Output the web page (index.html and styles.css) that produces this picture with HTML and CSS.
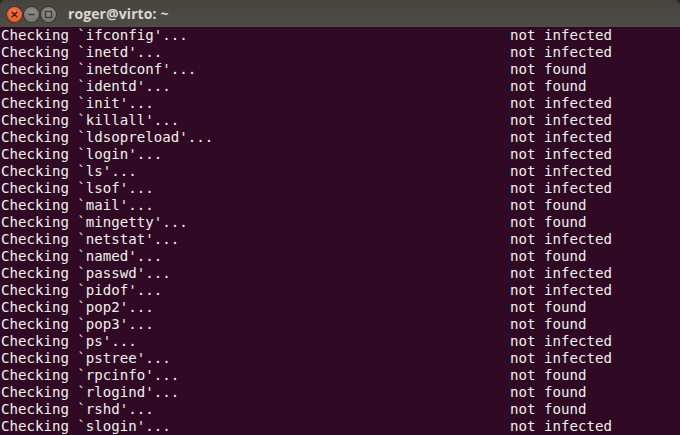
FILE: index.html
```html
<!DOCTYPE html>
<html>
<head>
<meta charset="utf-8">
<link rel="stylesheet" href="styles.css">
</head>
<body>
<div class="window">
  <div class="titlebar">
    <div class="buttons">
      <span class="btn close"><svg viewBox="0 0 16 16" width="15" height="15"><path d="M5.5 5.5l5 5M10.5 5.5l-5 5" stroke="#3b1f12" stroke-width="1.6" stroke-linecap="round"/></svg></span>
      <span class="btn"><svg viewBox="0 0 16 16" width="15" height="15"><path d="M4.5 8h7" stroke="#3c3b37" stroke-width="1.6"/></svg></span>
      <span class="btn"><svg viewBox="0 0 16 16" width="15" height="15"><rect x="4.8" y="4.8" width="6.4" height="6.4" fill="none" stroke="#3c3b37" stroke-width="1.4"/></svg></span>
    </div>
    <div class="title">roger@virto: ~</div>
  </div>
  <div class="term">
    <div class="row"><span class="c">Checking `ifconfig'...</span><span>not infected</span></div>
    <div class="row"><span class="c">Checking `inetd'...</span><span>not infected</span></div>
    <div class="row"><span class="c">Checking `inetdconf'...</span><span>not found</span></div>
    <div class="row"><span class="c">Checking `identd'...</span><span>not found</span></div>
    <div class="row"><span class="c">Checking `init'...</span><span>not infected</span></div>
    <div class="row"><span class="c">Checking `killall'...</span><span>not infected</span></div>
    <div class="row"><span class="c">Checking `ldsopreload'...</span><span>not infected</span></div>
    <div class="row"><span class="c">Checking `login'...</span><span>not infected</span></div>
    <div class="row"><span class="c">Checking `ls'...</span><span>not infected</span></div>
    <div class="row"><span class="c">Checking `lsof'...</span><span>not infected</span></div>
    <div class="row"><span class="c">Checking `mail'...</span><span>not found</span></div>
    <div class="row"><span class="c">Checking `mingetty'...</span><span>not found</span></div>
    <div class="row"><span class="c">Checking `netstat'...</span><span>not infected</span></div>
    <div class="row"><span class="c">Checking `named'...</span><span>not found</span></div>
    <div class="row"><span class="c">Checking `passwd'...</span><span>not infected</span></div>
    <div class="row"><span class="c">Checking `pidof'...</span><span>not infected</span></div>
    <div class="row"><span class="c">Checking `pop2'...</span><span>not found</span></div>
    <div class="row"><span class="c">Checking `pop3'...</span><span>not found</span></div>
    <div class="row"><span class="c">Checking `ps'...</span><span>not infected</span></div>
    <div class="row"><span class="c">Checking `pstree'...</span><span>not infected</span></div>
    <div class="row"><span class="c">Checking `rpcinfo'...</span><span>not found</span></div>
    <div class="row"><span class="c">Checking `rlogind'...</span><span>not found</span></div>
    <div class="row"><span class="c">Checking `rshd'...</span><span>not found</span></div>
    <div class="row"><span class="c">Checking `slogin'...</span><span>not infected</span></div>
  </div>
</div>
</body>
</html>
```
FILE: styles.css
```css
html, body {
  margin: 0;
  padding: 0;
  background: #2b2b2b;
  width: 680px;
  height: 435px;
  overflow: hidden;
}
.window {
  width: 680px;
  height: 435px;
  display: flex;
  flex-direction: column;
}
.titlebar {
  height: 27px;
  flex: 0 0 27px;
  background: linear-gradient(#45443f, #4d4c47);
  border-radius: 6px 6px 0 0;
  display: flex;
  align-items: center;
  box-sizing: border-box;
  padding-left: 7px;
}
.buttons {
  display: flex;
  gap: 2px;
  align-items: center;
  margin-top: 2px;
}
.btn {
  width: 15px;
  height: 15px;
  border-radius: 50%;
  background: radial-gradient(circle at 50% 35%, #8e8d88, #6f6e69);
  box-shadow: 0 0 0 1px #35342f;
  display: flex;
  align-items: center;
  justify-content: center;
}
.btn svg { display: block; }
.btn.close {
  background: radial-gradient(circle at 50% 35%, #f6794a, #e2531f);
  box-shadow: 0 0 0 1px #5a2a18;
}
.title {
  margin-left: 12px;
  font-family: "Open Sans", "DejaVu Sans", sans-serif;
  font-weight: 700;
  font-size: 14px;
  color: #dcd8cf;
  letter-spacing: 0.1px;
}
.term {
  flex: 1;
  background: #300a24;
  font-family: "DejaVu Sans Mono", monospace;
  font-size: 14.1px;
  line-height: 17px;
  color: #f2f0ee;
  padding-left: 1px;
  overflow: hidden;
}
.row {
  display: flex;
  height: 17px;
  white-space: pre;
}
.c {
  width: 60ch;
  flex: 0 0 60ch;
}
```
